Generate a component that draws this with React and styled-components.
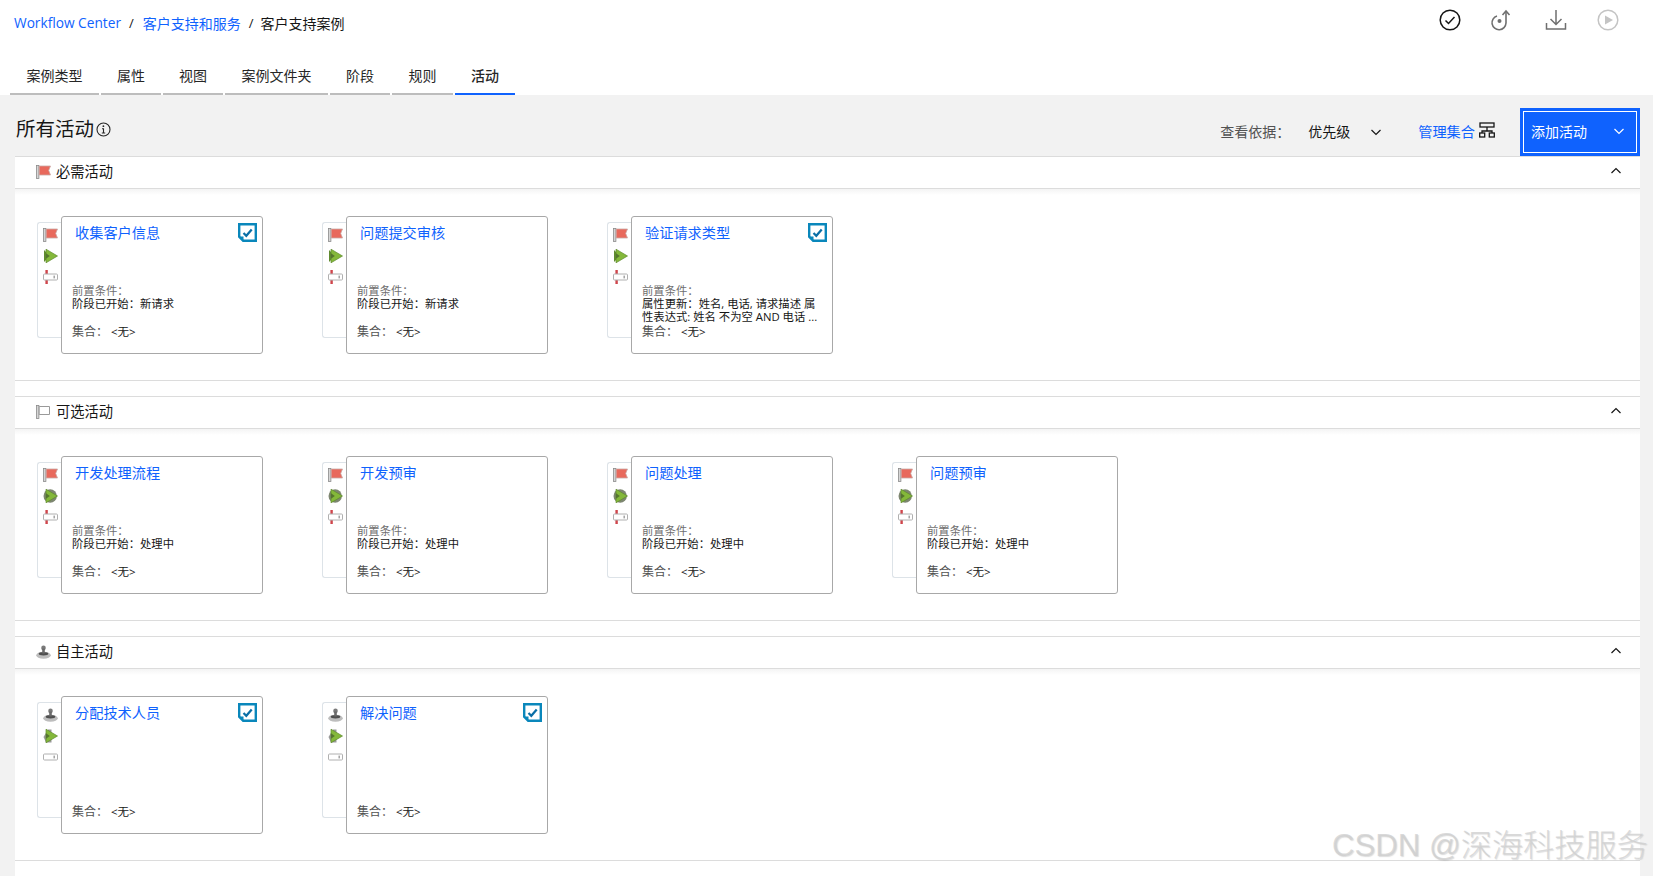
import React from 'react';
import styled, { createGlobalStyle } from 'styled-components';

const Global = createGlobalStyle`
  html, body { margin: 0; padding: 0; background: #fff; height: 100%; overflow: hidden; }
  body { font-family: "Open Sans", "Noto Sans CJK SC", sans-serif; color: #161616; }
  * { box-sizing: border-box; }
`;
const Page = styled.div`
  position: relative; width: 1653px; height: 876px; overflow: hidden;
  display: flex; flex-direction: column; background: #fff;
`;
const TopBar = styled.div`
  height: 60px; display: flex; justify-content: space-between; padding: 0 22px 0 14px;
`;
const Crumbs = styled.nav`
  display: flex; align-items: center; height: 45px; gap: 7px;
`;
const Crumb = styled.span`
  color: ${p => (p.$link ? '#0f62fe' : '#161616')};
  font-size: ${p => (p.$latin ? 13.7 : 14)}px;
  margin-left: ${p => p.$ml || 0}px;
`;
const Sep = styled.span`font-size: 13px; margin: 0 ${p => p.$mr || 1}px 0 1px;`;
const TopIcons = styled.div`display: flex; align-items: flex-start;`;
const TopIcon = styled.span`
  display: flex; width: ${p => p.$w}px; justify-content: center; padding-top: 9px; height: 40px;
`;
const Tabs = styled.div`
  display: flex; gap: 2px; padding-left: 10px; height: 35px;
`;
const Tab = styled.div`
  width: ${p => p.$w}px; height: 35px; display: flex; align-items: flex-start; justify-content: center;
  padding-top: 6px; font-size: 14px; line-height: 20px; color: #262626;
  font-weight: ${p => (p.$active ? 500 : 400)};
  border-bottom: 2px solid ${p => (p.$active ? '#0f62fe' : '#bdbdbd')};
`;
const Main = styled.main`
  flex: 1; background: #f2f2f2; padding: 0 13px 0 15px; display: flex; flex-direction: column; min-height: 0;
`;
const Header = styled.div`
  height: 61px; display: flex; align-items: flex-start; justify-content: space-between;
`;
const Title = styled.h1`
  margin: 21px 0 0 1px; font-size: 19.5px; font-weight: 400; line-height: 26px; display: flex; align-items: center; gap: 2px; color: #161616;
`;
const Controls = styled.div`display: flex; align-items: flex-start; height: 61px;`;
const ViewLabel = styled.span`
  font-size: 14px; color: #525252; margin-top: 27px; line-height: 20px;
`;
const ViewValue = styled.span`
  font-size: 14px; margin: 27px 0 0 18px; line-height: 20px; color: #161616;
`;
const ViewChevron = styled.span`display: flex; margin: 31px 0 0 20px;`;
const Manage = styled.span`
  color: #0f62fe; font-size: 14.2px; line-height: 20px; margin: 27px 0 0 36px;
`;
const ManageIcon = styled.span`display: flex; margin: 27px 25px 0 4px;`;
const AddButton = styled.div`
  width: 120px; height: 48px; margin-top: 13px; background: #0f62fe; padding: 3px;
  color: #fff; font-size: 14px;
`;
const AddInner = styled.div`
  height: 100%; border: 1px solid #fff; display: flex; align-items: center; justify-content: space-between;
  padding: 0 11px 2px 7px;
`;
const Section = styled.section`
  background: #fff;
  padding-bottom: ${p => p.$gap}px;
`;
const SectionHead = styled.div`
  height: 33px; display: flex; align-items: center; justify-content: space-between;
  border-top: 1px solid #dcdcdc; border-bottom: 1px solid #dcdcdc;
  padding: 0 18px 3px 21px; font-size: 14.25px; color: #161616; background: #fff;
`;
const HeadLabel = styled.div`display: flex; align-items: center; gap: 5px; line-height: 20px; padding-top: 2px;`;
const SectionBody = styled.div`
  display: flex; gap: 59px; padding: 27px 0 26px 22px; border-bottom: 1px solid #dcdcdc;
  background: linear-gradient(#f4f4f4, #fff 6px);
`;
const CardWrap = styled.div`
  width: 226px; height: 138px; display: flex; align-items: flex-start; flex-shrink: 0;
`;
const SideRail = styled.div`
  width: 26px; height: 116px; margin-top: 6px; margin-right: -2px; border: 1px solid #dde3e8; border-right: 0;
  border-radius: 3px 0 0 3px; display: flex; flex-direction: column; align-items: center;
  padding: 4px 1px 0 0; gap: 5px; background: #fff;
`;
const RailIcon = styled.span`display: flex; height: 16px; align-items: center;`;
const Card = styled.article`
  position: relative; width: 202px; height: 138px; border: 1px solid #a8a8a8; border-radius: 3px; background: #fff;
  display: flex; flex-direction: column; font-size: 11.33px; line-height: 13px;
`;
const CardTitle = styled.div`
  color: #0f62fe; font-size: 14.2px; line-height: 20px; margin: 6px 0 0 13px;
`;
const CardCheck = styled.span`position: absolute; right: 5px; top: 6px; display: flex;`;
const Conditions = styled.div`
  margin: auto 0 0 10px; width: 183px; color: #161616; padding-bottom: ${p => p.$pad}px;
  white-space: nowrap;
`;
const CondLabel = styled.div`color: #6f6f6f;`;
const CollectionRow = styled.div`
  display: flex; align-items: center; margin: ${p => (p.$alone ? 'auto' : 0)} 0 14px 10px;
  color: #525252; font-size: 12px; line-height: 14px;
`;
const CollectionValue = styled.span`color: #161616; margin-left: 3px; font-size: 11.5px;`;
const Watermark = styled.div`
  position: absolute; left: 1332px; top: 826px; font-size: 31.2px; line-height: 40px; white-space: nowrap;
  font-family: "Liberation Sans", "Noto Sans CJK SC", sans-serif; font-weight: 300;
  color: rgba(205,205,205,.72); text-shadow: 1px 1px 1px rgba(150,150,150,.32);
`;

const Chevron = ({ up, color = '#161616', size = 12 }) => (
  <svg width={size} height={size} viewBox="0 0 12 12" fill="none" stroke={color} strokeWidth="1.2">
    <path d={up ? 'M1.5 8 6 3.5 10.5 8' : 'M1.5 4 6 8.5 10.5 4'} />
  </svg>
);
const Pole = () => <rect x="0.5" y="0.5" width="2.4" height="13" fill="#d6d6d6" stroke="#8a8a8a" strokeWidth=".8" />;
const FlagRed = () => (
  <svg width="15" height="14" viewBox="0 0 15 14">
    <Pole />
    <path d="M3.200 1h11.300l-1.800 4.400 1.800 4.600H3.200z" fill="#e8695c" stroke="#c9a8a4" strokeWidth=".8" />
  </svg>
);
const FlagOutline = () => (
  <svg width="15" height="14" viewBox="0 0 15 14">
    <Pole />
    <path d="M3.200 1.500h10.300v8H3.200z" fill="#fff" stroke="#9a9a9a" />
  </svg>
);
const Stamp = () => (
  <svg width="15" height="14" viewBox="0 0 15 14">
    <ellipse cx="7.500" cy="10.200" rx="7.300" ry="3.500" fill="#bdbdbd" />
    <ellipse cx="7.500" cy="8.700" rx="4.800" ry="1.700" fill="#4f4f4f" />
    <circle cx="7.500" cy="2.900" r="2.300" fill="#7a7a7a" />
    <rect x="6.200" y="3.500" width="2.600" height="5" fill="#6a6a6a" />
  </svg>
);
const Play = ({ kind }) => (
  <svg width="15" height="16" viewBox="0 0 15 16">
    {kind === 'round' && <circle cx="7.200" cy="8" r="6.700" fill="#7d8670" />}
    {kind === 'stamp' && <path d="M0.500 9 5 1.500h3.500v13H3z" fill="#999" />}
    {kind === 'plain' && <path d="M1 2 7 8l-6 6z" fill="#5f8a2f" />}
    <path d="M3 1.200 14.500 8 3 14.800z" fill="#84b83a" stroke="#5d8a2c" strokeWidth=".7" />
    <path d="M3 5.200 6.800 8 3 10.800z" fill="#55752e" />
  </svg>
);
const Manual = ({ red = true }) => (
  <svg width="15" height="16" viewBox="0 0 15 16">
    {red && <rect x="2.400" y="1" width="2.400" height="14" fill="#cf454b" />}
    <rect x="0.500" y="5" width="14" height="6" rx="1" fill="#fff" stroke="#b0b0b0" />
    <rect x="10.500" y="6.600" width="1.400" height="2.800" fill="#9c9c9c" />
  </svg>
);
const Check = () => (
  <svg width="19" height="19" viewBox="0 0 19 19">
    <path d="M1.200 1.200h16.600v16.600H5.200l-4-4z" fill="#fff" stroke="#0a87bb" strokeWidth="2.400" />
    <path d="M1 13.500l4.500 4.500v-4.500z" fill="#0a87bb" />
    <path d="M5.500 10l2.800 2.800 5.400-6.300" fill="none" stroke="#0a6ea6" strokeWidth="2.200" />
  </svg>
);

const flags = { required: FlagRed, optional: FlagOutline, auto: Stamp };

const ActivityCard = ({ title, checked, conds, rail: RailFirst, play, noManualRed }) => (
  <CardWrap>
    <SideRail>
      <RailIcon><RailFirst /></RailIcon>
      <RailIcon><Play kind={play} /></RailIcon>
      <RailIcon><Manual red={!noManualRed} /></RailIcon>
    </SideRail>
    <Card>
      <CardTitle>{title}</CardTitle>
      {checked && <CardCheck><Check /></CardCheck>}
      {conds && (
        <Conditions $pad={conds.length > 1 ? 2 : 15}>
          <CondLabel>前置条件：</CondLabel>
          {conds.map(c => <div key={c}>{c}</div>)}
        </Conditions>
      )}
      <CollectionRow $alone={!conds}>
        集合：<CollectionValue>&lt;无&gt;</CollectionValue>
      </CollectionRow>
    </Card>
  </CardWrap>
);

const sections = [
  {
    name: '必需活动', icon: 'required', rail: FlagRed, play: 'plain',
    cards: [
      { title: '收集客户信息', checked: true, conds: ['阶段已开始：新请求'] },
      { title: '问题提交审核', conds: ['阶段已开始：新请求'] },
      { title: '验证请求类型', checked: true, conds: ['属性更新：姓名, 电话, 请求描述 属', '性表达式: 姓名 不为空 AND 电话 ...'] },
    ],
  },
  {
    name: '可选活动', icon: 'optional', rail: FlagRed, play: 'round',
    cards: [
      { title: '开发处理流程', conds: ['阶段已开始：处理中'] },
      { title: '开发预审', conds: ['阶段已开始：处理中'] },
      { title: '问题处理', conds: ['阶段已开始：处理中'] },
      { title: '问题预审', conds: ['阶段已开始：处理中'] },
    ],
  },
  {
    name: '自主活动', icon: 'auto', rail: Stamp, play: 'stamp', noManualRed: true,
    cards: [
      { title: '分配技术人员', checked: true },
      { title: '解决问题', checked: true },
    ],
  },
];

const tabs = [['案例类型', 89], ['属性', 60], ['视图', 60], ['案例文件夹', 103], ['阶段', 60], ['规则', 61], ['活动', 60]];

export default function App() {
  return (
    <Page>
      <Global />
      <TopBar>
        <Crumbs>
          <Crumb $link $latin>Workflow Center</Crumb><Sep>/</Sep>
          <Crumb $link $ml={1}>客户支持和服务</Crumb><Sep $mr={0}>/</Sep>
          <Crumb $ml={-1}>客户支持案例</Crumb>
        </Crumbs>
        <TopIcons>
          <TopIcon $w={50}>
            <svg width="22" height="22" viewBox="0 0 22 22" fill="none" stroke="#161616" strokeWidth="1.500"><circle cx="11" cy="11" r="9.800" /><path d="M6.500 11.500l3 3 6-6.500" /></svg>
          </TopIcon>
          <TopIcon $w={52}>
            <svg width="22" height="22" viewBox="0 0 22 22" fill="none" stroke="#6f6f6f" strokeWidth="1.600"><path d="M16 3v11a7 7 0 1 1-9-7" /><path d="M12.500 6 16 2l3.500 4" /><circle cx="9.500" cy="12" r="2" fill="#6f6f6f" stroke="none" /></svg>
          </TopIcon>
          <TopIcon $w={58}>
            <svg width="22" height="22" viewBox="0 0 22 22" fill="none" stroke="#6f6f6f" strokeWidth="1.500"><path d="M11 1v14M5.500 10l5.500 5.500 5.500-5.500M1.500 14v6h19v-6" /></svg>
          </TopIcon>
          <TopIcon $w={46}>
            <svg width="22" height="22" viewBox="0 0 22 22" fill="none" stroke="#c4c4c4" strokeWidth="1.500"><circle cx="11" cy="11" r="9.800" /><path d="M8 6.500v9l8-4.500z" fill="#c4c4c4" stroke="none" /></svg>
          </TopIcon>
        </TopIcons>
      </TopBar>
      <Tabs>
        {tabs.map(([t, w]) => <Tab key={t} $w={w} $active={t === '活动'}>{t}</Tab>)}
      </Tabs>
      <Main>
        <Header>
          <Title>
            所有活动
            <svg width="15" height="15" viewBox="0 0 15 15" fill="none" stroke="#262626" strokeWidth="1.100"><circle cx="7.500" cy="7.500" r="6.500" /><path d="M6 6.700h1.500v4.300M5.800 11h3.400" /><circle cx="7.400" cy="4.200" r=".9" fill="#262626" stroke="none" /></svg>
          </Title>
          <Controls>
            <ViewLabel>查看依据：</ViewLabel>
            <ViewValue>优先级</ViewValue>
            <ViewChevron><Chevron /></ViewChevron>
            <Manage>管理集合</Manage>
            <ManageIcon>
              <svg width="16" height="16" viewBox="0 0 16 16" fill="none" stroke="#161616" strokeWidth="1.300"><rect x="1" y="1" width="14" height="4" /><path d="M8 5v4M3 11V9h10v2" /><rect x="0.700" y="11" width="5" height="4" /><rect x="10.300" y="11" width="5" height="4" /></svg>
            </ManageIcon>
            <AddButton>
              <AddInner>添加活动<Chevron color="#fff" /></AddInner>
            </AddButton>
          </Controls>
        </Header>
        {sections.map(s => {
          const Icon = flags[s.icon];
          return (
            <Section key={s.name} $gap={15}>
              <SectionHead>
                <HeadLabel><Icon />{s.name}</HeadLabel>
                <Chevron up />
              </SectionHead>
              <SectionBody>
                {s.cards.map(c => (
                  <ActivityCard key={c.title} {...c} rail={s.rail} play={s.play} noManualRed={s.noManualRed} />
                ))}
              </SectionBody>
            </Section>
          );
        })}
      </Main>
      <Watermark>CSDN @深海科技服务</Watermark>
    </Page>
  );
}
